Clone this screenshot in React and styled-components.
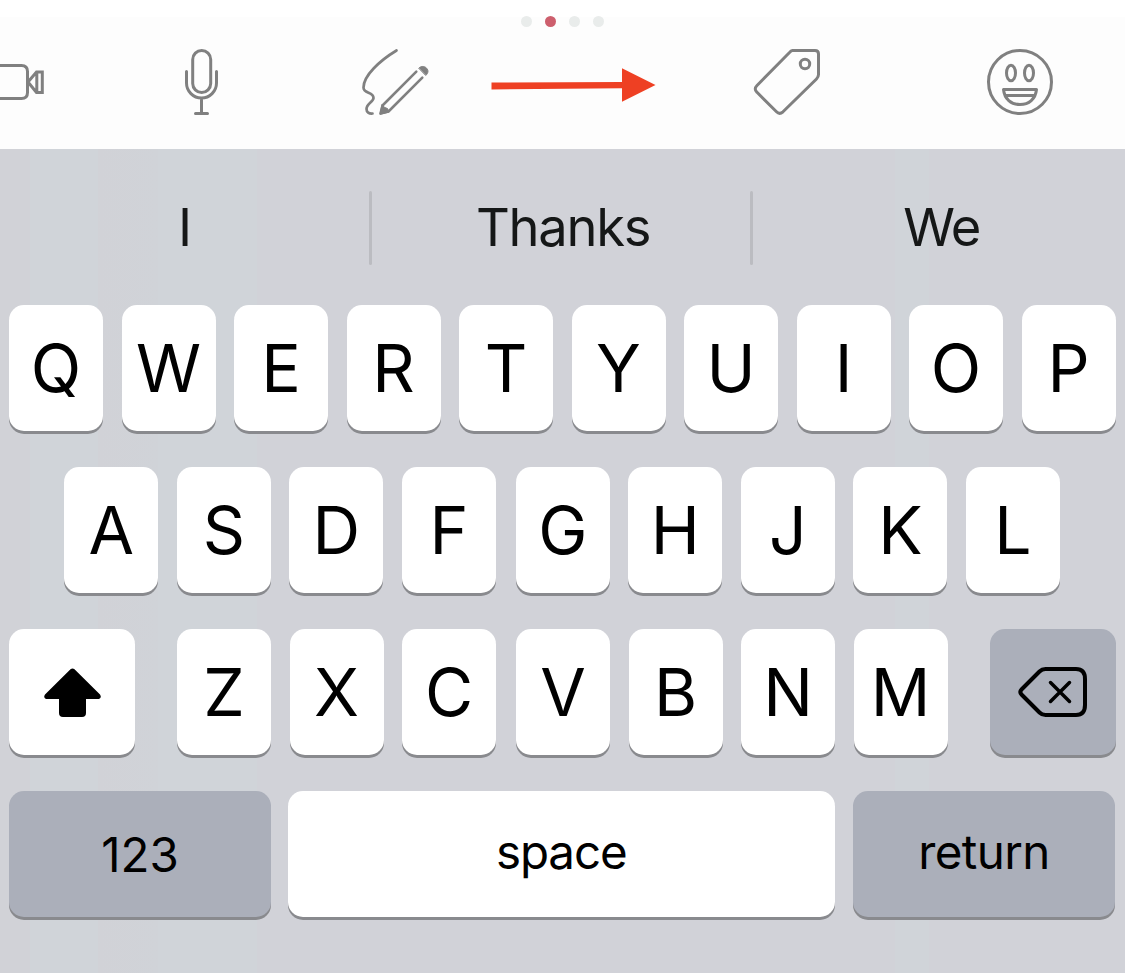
import React from "react";
import styled, { createGlobalStyle } from "styled-components";

const GlobalStyle = createGlobalStyle`
  * { box-sizing: border-box; }
  body {
    margin: 0;
    overflow: hidden;
    background: #d1d2d8;
    font-family: Inter, "Liberation Sans", sans-serif;
  }
`;

const Screen = styled.main`
  width: 1125px;
  height: 973px;
  display: flex;
  flex-direction: column;
`;

const Toolbar = styled.header`
  height: 149px;
  flex: none;
  background: linear-gradient(#fff 17px, #fdfdfd 17px);
`;

const PageDots = styled.div`
  height: 46px;
  padding-top: 16px;
  display: flex;
  justify-content: center;
  gap: 13px;
`;

const Dot = styled.span`
  width: 11px;
  height: 11px;
  border-radius: 50%;
  background: ${(p) => (p.$active ? "#cd5f6d" : "#e9eceb")};
`;

const Tools = styled.nav`
  display: flex;
  height: 72px;
`;

const Tool = styled.svg`
  display: block;
  flex: none;
  height: 72px;
  width: ${(p) => p.$width}px;
  margin-left: ${(p) => p.$gap}px;
  fill: none;
  stroke: #808080;
  stroke-width: 3;
  stroke-linecap: round;
  stroke-linejoin: round;
`;

const Keyboard = styled.section`
  flex: 1;
  display: flex;
  flex-direction: column;
  background: linear-gradient(
    90deg,
    #d1d2d7 30px, #d0d4d9 30px, #d0d4d9 98px,
    #d1d2d7 98px, #d0d3d8 158px, #d0d4d9 158px, #d0d4d9 257px,
    #d1d2d8 257px, #d1d2d8 895px, #d0d4d9 895px, #d0d4d9 929px,
    #d1d2d8 929px
  );
`;

const Suggestions = styled.div`
  height: 156px;
  padding-top: 42px;
  display: grid;
  grid-template-columns: 369px 3px 378px 3px 372px;
`;

const Suggestion = styled.span`
  height: 73px;
  display: flex;
  align-items: center;
  justify-content: center;
  padding-bottom: 2px;
  padding-left: ${(p) => p.$inset || 0}px;
  font-size: 52.5px;
  letter-spacing: ${(p) => p.$tracking || 0}px;
  color: #151717;
`;

const Divider = styled.i`
  height: 74px;
  border-radius: 2px;
  background: #bbbcc1;
`;

const Rows = styled.div`
  display: flex;
  flex-direction: column;
  gap: 36px;
`;

const Row = styled.div`
  display: flex;
  gap: 18.5px;
  padding-left: ${(p) => p.$inset}px;
`;

const Key = styled.button`
  flex: none;
  display: flex;
  align-items: center;
  justify-content: center;
  width: ${(p) => p.$width || 94}px;
  height: 126px;
  margin: 0 0 0 ${(p) => p.$gap || 0}px;
  padding: ${(p) => p.$drop || 0}px 0 ${(p) => p.$lift || 0}px;
  border: 0;
  border-radius: 15px;
  background: ${(p) => (p.$dark ? "#abafba" : "#fff")};
  box-shadow: 0 3px 0 #898a8e;
  color: #000;
  font-family: inherit;
  font-size: ${(p) => (p.$label ? 47.5 : 66)}px;
  letter-spacing: ${(p) => p.$tracking || 0}px;
  line-height: 1;
`;

const KeyIcon = styled.svg`
  display: block;
  flex: none;
`;

export default function App() {
  return (
    <>
      <GlobalStyle />
      <Screen>
        <Toolbar>
          <PageDots>
            <Dot />
            <Dot $active />
            <Dot />
            <Dot />
          </PageDots>
          <Tools>
            <Tool $width={48} $gap={0} viewBox="0 46 48 72">
              <path d="M-5 65.5H21.5Q27.5 65.5 27.5 71.5V92.5Q27.5 98.5 21.5 98.5H-5" />
              <path d="M28 82L36.5 72H42.3V92.5H36.5L28 82M36.8 72V92.5" strokeLinejoin="miter" />
            </Tool>
            <Tool $width={40} $gap={133} viewBox="181 46 40 72">
              <rect x="192.7" y="50.5" width="18" height="42" rx="9" />
              <path d="M186.5 71.5V83A15 15 0 0 0 216.5 83V71.5M201.5 98.5V113M195.5 113.5H207.5" />
            </Tool>
            <Tool $width={72} $gap={138} viewBox="359 46 72 72">
              <path d="M396.5 50.5C380 60.500 363.500 75.500 363.500 87.500C363.500 94 373.500 91.500 373.500 98C373.500 102 366.500 103.500 366.500 109C366.500 112.300 369 113.800 372.500 113.500" strokeWidth="2.7" />
              <path d="M416.300 71.700L382.500 105.500L380.500 113.500L388.500 111.500L422.300 77.700" strokeWidth="2.600" />
              <path d="M382 104.800L380 114.300L389 112L387.500 108.500L384.800 107.500Z" fill="#808080" strokeWidth="1" />
              <path d="M419 68C422 65.300 425 66.500 426.600 68.200C428.600 70.300 428.500 73 426 75.200Z" fill="#808080" strokeWidth="1" />
            </Tool>
            <Tool $width={168} $gap={58} viewBox="489 46 168 72">
              <path d="M491.500 82.500L622 82V68.300L655.500 85L622 101.700V88.300L491.500 89.500Z" fill="#ee4023" stroke="none" />
            </Tool>
            <Tool $width={72} $gap={94} viewBox="751 46 72 72">
              <path d="M792.500 50.500H815Q818.500 50.500 818.500 54V74.500Q818.500 77 816.500 79L783 111.800Q779.500 115 776.500 111.800L757 92.300Q753.500 89 757 85.500L790 52Q791.300 50.500 792.500 50.500Z" />
              <circle cx="805" cy="64" r="4.700" />
            </Tool>
            <Tool $width={70} $gap={162} viewBox="985 46 70 72">
              <circle cx="1020" cy="82" r="31.500" />
              <ellipse cx="1011" cy="73" rx="4.500" ry="7.700" />
              <ellipse cx="1029" cy="73" rx="4.500" ry="7.700" />
              <path d="M1003.500 89.500H1036.500C1035.500 99 1029 104.500 1020 104.500S1004.500 99 1003.500 89.500ZM1005.500 95.500H1034.500" />
            </Tool>
          </Tools>
        </Toolbar>

        <Keyboard>
          <Suggestions>
            <Suggestion $inset={1}>I</Suggestion>
            <Divider />
            <Suggestion $inset={4} $tracking={-1.3}>Thanks</Suggestion>
            <Divider />
            <Suggestion $inset={5} $tracking={-1.5}>We</Suggestion>
          </Suggestions>
          <Rows>
            <Row $inset={9}>
              {[..."QWERTYUIOP"].map((c) => (
                <Key key={c}>{c}</Key>
              ))}
            </Row>
            <Row $inset={64.4}>
              {[..."ASDFGHJKL"].map((c) => (
                <Key key={c} $gap={c === "G" ? 1.5 : 0}>{c}</Key>
              ))}
            </Row>
            <Row $inset={9}>
              <Key $width={126} $drop={1} aria-label="shift">
                <KeyIcon width="58" height="52" viewBox="-.5 0 58 52">
                  <path
                    d="M27 2.300Q29 .5 31 2.300L56.500 27.500Q58.500 30.500 55.500 32H42.500V46Q42.500 50 38.500 50H19.500Q15.500 50 15.500 46V32H2.500Q-.5 30.500 1.500 27.500Z"
                  />
                </KeyIcon>
              </Key>
              {[..."ZXCVBNM"].map((c) => (
                <Key key={c} $gap={c === "Z" ? 23.5 : c === "V" ? 1.5 : 0}>{c}</Key>
              ))}
              <Key $width={126} $gap={24} $dark aria-label="delete">
                <KeyIcon
                  width="70"
                  height="52"
                  viewBox="0 0 70 52"
                  fill="none"
                  stroke="#000"
                  strokeWidth="4"
                  strokeLinecap="round"
                  strokeLinejoin="round"
                >
                  <path d="M27.500 3H58Q67 3 67 13V39Q67 49 58 49H27.500Q24 49 21.500 46.500L3.500 28.500Q1 26 3.500 23.500L21.500 5.500Q24 3 27.500 3Z" />
                  <path d="M32.500 16.500L51.500 35.500M51.500 16.500L32.500 35.500" strokeWidth="3.500" />
                </KeyIcon>
              </Key>
            </Row>
            <Row $inset={9}>
              <Key $width={262} $drop={2} $dark $label>123</Key>
              <Key $width={546.5} $gap={-1.5} $lift={5} $tracking={-1.1} $label>space</Key>
              <Key $width={262} $lift={5} $dark $tracking={-0.6} $label>return</Key>
            </Row>
          </Rows>
        </Keyboard>
      </Screen>
    </>
  );
}
